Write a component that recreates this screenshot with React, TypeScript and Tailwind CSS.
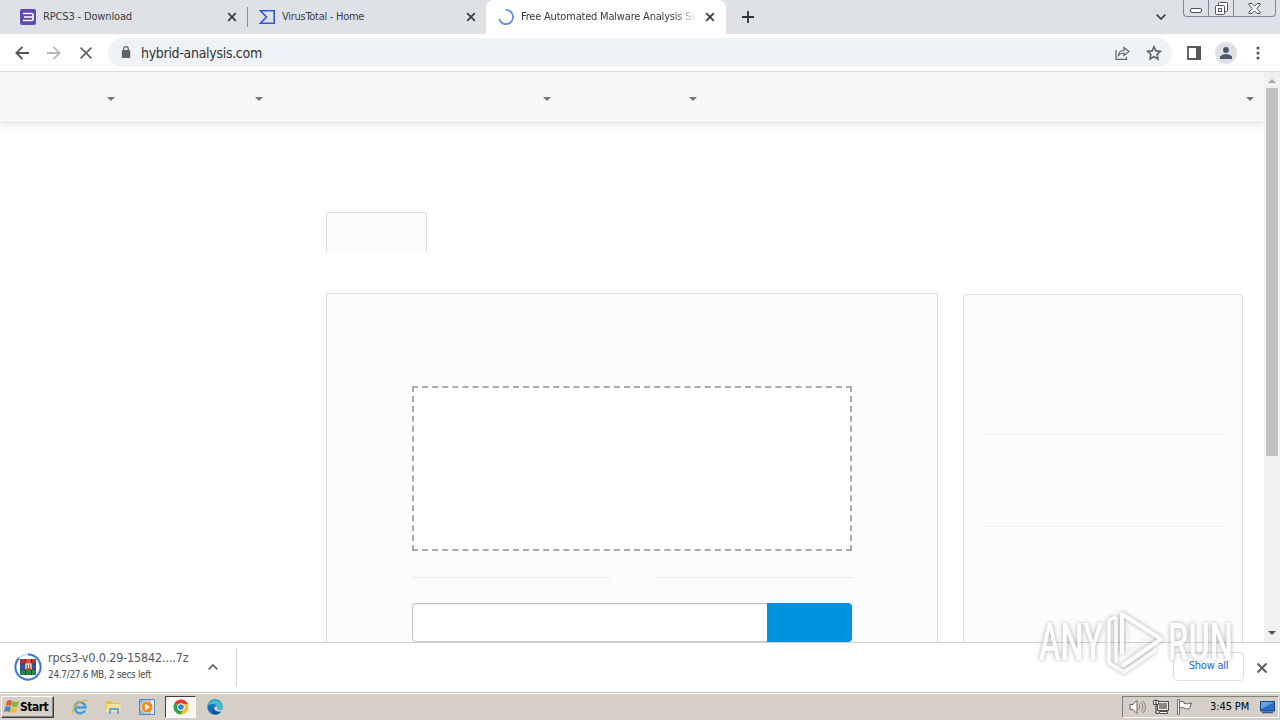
import React from "react";

const CloseIcon: React.FC<{ className?: string }> = ({ className }) => (
  <svg viewBox="0 0 10 10" className={className} fill="none">
    <path d="M1.2 1.2 8.8 8.8M8.8 1.2 1.2 8.8" stroke="currentColor" strokeWidth="1.8" />
  </svg>
);

const TabStrip: React.FC = () => {
  return (
    <div className="flex h-[34px] w-full bg-[#dee1e6] text-[11px] text-[#3c4043]">
      <div className="flex h-full w-[247px] items-center pl-5 pr-[10px]">
        <svg viewBox="0 0 16 16" className="size-4 shrink-0">
          <rect width="16" height="16" rx="2" fill="#6246b5" />
          <path d="M3 4.5h8.5q1.5 0 1.5 1.5v4q0 1.5-1.5 1.5H3M4 8h8" stroke="#fff" strokeWidth="1.7" fill="none" />
        </svg>
        <span className="ml-[7px] w-[178px] whitespace-nowrap tracking-[-0.15px]">RPCS3 - Download</span>
        <CloseIcon className="ml-[6px] size-[10px] shrink-0" />
      </div>
      <div className="flex h-full w-[239px] items-center">
        <div className="h-5 w-px bg-[#8b8e94]" />
        <svg viewBox="0 0 16 14" className="ml-[11px] h-[14px] w-4 shrink-0" fill="none">
          <path d="M1.5.8h13.7v12.4H1.5L7.500 7z" stroke="#3157dc" strokeWidth="1.6" />
        </svg>
        <span className="ml-[7px] w-[178px] whitespace-nowrap tracking-[-0.27px]">VirusTotal - Home</span>
        <CloseIcon className="ml-[6px] size-[10px] shrink-0" />
      </div>
      {/* Active tab */}
      <div className="flex h-full w-[240px] items-center rounded-t-lg bg-white pl-3">
        <svg viewBox="0 0 16 16" className="size-4 shrink-0" fill="none">
          <path d="M8 .9A7.1 7.1 0 1 1 1.2 10.1" stroke="#5d8fd6" strokeWidth="1.8" />
        </svg>
        <span className="ml-[7px] w-[175px] overflow-hidden whitespace-nowrap bg-linear-to-r from-[#303236] from-88% to-transparent bg-clip-text tracking-[-0.2px] text-transparent">
          Free Automated Malware Analysis Se
        </span>
        <CloseIcon className="ml-[9px] size-[10px] shrink-0" />
      </div>
      <svg viewBox="0 0 12 12" className="ml-4 mt-[11px] size-3 shrink-0">
        <path d="M6 0v12M0 6h12" stroke="#303236" strokeWidth="1.8" />
      </svg>
      <svg viewBox="0 0 10 6" className="ml-[402px] mt-[14px] h-[6px] w-[10px] shrink-0" fill="none">
        <path d="M.7.7 5 5 9.3.7" stroke="#3c4043" strokeWidth="1.7" />
      </svg>
      <div className="ml-[17px] flex h-[17px] w-[93px] rounded-b border border-t-0 border-[#85888e] text-[#505359]">
        <div className="flex w-[25px] justify-center border-r border-[#85888e] pt-2">
          <div className="h-[5px] w-3 rounded-[2px] border border-current bg-white" />
        </div>
        <div className="flex w-[25px] justify-center border-r border-[#85888e] pt-[2px]">
          <svg viewBox="0 0 13 13" className="size-[13px]" fill="#fff" stroke="currentColor">
            <rect x="3.5" y=".5" width="9" height="9" rx="1" />
            <rect x=".5" y="3.5" width="9" height="9" rx="1" />
            <rect x="3.5" y="6.5" width="3" height="3" />
          </svg>
        </div>
        <div className="flex flex-1 justify-center pt-[3px]">
          <svg viewBox="0 0 13 11" className="h-[11px] w-[13px]">
            <path d="M1 .5h3l2.500 2.600L9 .5h3V2L8.700 5.500 12 9v1.500H9L6.500 7.900 4 10.500H1V9l3.300-3.500L1 2z" fill="#fff" stroke="currentColor" />
          </svg>
        </div>
      </div>
    </div>
  );
};

const Toolbar: React.FC = () => {
  return (
    <div className="flex h-[38px] items-center border-b border-[#d9dadc] bg-white text-[#5f6368]">
      <svg viewBox="0 0 14 14" className="ml-[15px] size-[14px]" fill="none" stroke="#505357" strokeWidth="1.8">
        <path d="M14 7H1.5M7.5.8 1.3 7l6.2 6.2" />
      </svg>
      <svg viewBox="0 0 14 14" className="ml-[18px] size-[14px]" fill="none" stroke="#b8babd" strokeWidth="1.8">
        <path d="M0 7h12.5M6.5.8 12.7 7l-6.2 6.2" />
      </svg>
      <svg viewBox="0 0 12 12" className="ml-[19px] size-3" fill="none" stroke="#5f6266" strokeWidth="1.7">
        <path d="M.6.6l10.8 10.8M11.4.6.6 11.4" />
      </svg>
      <div className="ml-4 flex h-[29px] w-[1064px] items-center rounded-full bg-[#f0f3f5]">
        <svg viewBox="0 0 10 12" className="-mt-px ml-[13px] h-3 w-[10px]">
          <rect x=".8" y="4" width="8.4" height="8" rx="1" fill="#5f6368" />
          <path d="M2.7 4.500V3a2.300 2.300 0 0 1 4.600 0v1.500" fill="none" stroke="#5f6368" strokeWidth="1.2" />
        </svg>
        <span className="ml-[10px] mt-px w-[960px] whitespace-nowrap text-[14px] tracking-[-0.3px] text-[#303134]">
          hybrid-analysis.com
        </span>
        <svg viewBox="0 0 15 14" className="ml-[14px] h-[14px] w-[15px]" fill="none" stroke="currentColor" strokeWidth="1.2">
          <path d="M1 4v9.300h10.500V11M3.500 9.500q.5-5 5.500-5V1.500l5 4-5 4V7Q5.500 7 3.500 9.500z" />
        </svg>
        <svg viewBox="0 0 16 16" className="ml-4 size-4" fill="none" stroke="currentColor" strokeWidth="1.6">
          <path d="m8 1.800 1.900 4.100 4.500.5-3.300 3.100.9 4.500-4-2.300L4 14l.9-4.500-3.300-3.100 4.500-.5z" />
        </svg>
      </div>
      <svg viewBox="0 0 14 14" className="ml-[15px] size-[14px]">
        <path d="M1 1h12v12H1z" fill="none" stroke="#55585c" strokeWidth="1.8" />
        <path d="M9 0h5v14H9z" fill="#55585c" />
      </svg>
      <div className="ml-[14px] flex size-[22px] items-center justify-center rounded-full bg-[#dde0e5]">
        <svg viewBox="0 0 12 12" className="size-3" fill="#4c5870">
          <circle cx="6" cy="3" r="2.9" />
          <path d="M0 12V9.500Q2 7 6 7t6 2.500V12z" />
        </svg>
      </div>
      <svg viewBox="0 0 4 14" className="ml-[19px] h-[14px] w-1" fill="#505357">
        <circle cx="2" cy="2" r="1.5" />
        <circle cx="2" cy="7" r="1.5" />
        <circle cx="2" cy="12" r="1.5" />
      </svg>
    </div>
  );
};

const Caret: React.FC<{ className: string }> = ({ className }) => (
  <div className={`${className} size-0 border-x-4 border-t-4 border-x-transparent border-t-[#777]`} />
);

const Page: React.FC = () => {
  return (
    <div className="flex h-[570px] w-full overflow-hidden">
      <div className="h-full w-[1264px] overflow-hidden bg-white">
        <div className="flex h-[51px] items-center border-b border-[#e4e4e4] bg-[#f7f7f7] pt-[3px] shadow-[0_2px_8px_rgba(0,0,0,0.09)]">
          <Caret className="ml-[107px]" />
          <Caret className="ml-[140px]" />
          <Caret className="ml-[280px]" />
          <Caret className="ml-[138px]" />
          <Caret className="ml-[549px]" />
        </div>
        <div className="ml-[326px] mt-[89px] h-10 w-[101px] rounded-t-[3px] border border-b-0 border-[#dddde0] bg-[#fcfcfe]" />
        <div className="ml-[326px] mt-[41px] flex">
          <div className="h-[400px] w-[612px] border border-[#dddddf] bg-[#fcfcfe] px-[85px] pt-[92px]">
            <div className="h-[165px] w-[440px] border-2 border-dashed border-[#aaa] bg-white" />
            <div className="mt-[26px] flex w-[441px] justify-between">
              <div className="h-px w-[198px] bg-[#e9e9eb]" />
              <div className="h-px w-[198px] bg-[#e9e9eb]" />
            </div>
            <div className="mt-[25px] flex h-[39px] w-[440px]">
              <div className="w-[355px] rounded-l border border-r-0 border-[#c4c4c4] bg-white shadow-[inset_0_1px_1px_rgba(0,0,0,0.07)]" />
              <div className="w-[85px] rounded-r bg-[#0093dd]" />
            </div>
          </div>
          <div className="ml-[25px] mt-px h-[400px] w-[280px] rounded-t-[3px] border border-[#dddddf] bg-[#fcfcfe] px-5 pt-[139px]">
            <div className="h-px bg-[#ececee]" />
            <div className="mt-[91px] h-px bg-[#ececee]" />
          </div>
        </div>
      </div>
      {/* Scrollbar */}
      <div className="flex h-full w-4 flex-col items-center bg-[#f1f1f1]">
        <div className="mt-[7px] size-0 border-x-4 border-b-4 border-x-transparent border-b-[#a3a3a3]" />
        <div className="mt-[5px] h-[368px] w-3 bg-[#c1c1c1]" />
        <div className="mt-[175px] size-0 border-x-4 border-t-4 border-x-transparent border-t-[#505050]" />
      </div>
    </div>
  );
};

const DownloadBar: React.FC = () => {
  return (
    <div className="flex h-[50px] items-center border-t border-[#d0d1d4] bg-white pb-[2px]">
      <svg viewBox="0 0 28 28" className="ml-[14px] size-7 shrink-0">
        <circle cx="14" cy="14" r="12.6" fill="none" stroke="#c9d8ee" strokeWidth="1.8" />
        <path d="M14 1.400A12.600 12.600 0 1 1 5 5.200" fill="none" stroke="#3b78d8" strokeWidth="2" />
        <path d="M6 6h5v5H6z" fill="#a83a3e" />
        <path d="M11 6h6v5h-6z" fill="#e0513f" />
        <path d="M17 6h5v5h-5z" fill="#a83a3e" />
        <path d="M6 11h16v5H6z" fill="#3752a8" />
        <path d="M6 16h16v6H6z" fill="#28864a" />
        <path d="M11 6h1v16h-1zM17 6h1v16h-1z" fill="#4b2929" />
        <path d="M6 11h16M6 16.500h16" stroke="#3a3434" strokeWidth=".8" />
        <path d="M11 10h7v7h-7z" fill="#b84a35" />
        <path d="M12 16v-5h5v5M14.500 11v4" fill="none" stroke="#f6ead2" strokeWidth="1.2" />
      </svg>
      <div className="ml-[6px] w-[150px] whitespace-nowrap">
        <div className="text-[12.500px] leading-4 tracking-[-0.15px] text-[#55585c]">rpcs3-v0.0.29-15842....7z</div>
        <div className="pt-px text-[10px] leading-4 tracking-[-0.33px] text-[#4a4d51]">24.7/27.6 MB, 2 secs left</div>
      </div>
      <svg viewBox="0 0 10 6" className="ml-[10px] h-[6px] w-[10px]" fill="none">
        <path d="M.7 5.300 5 1l4.300 4.300" stroke="#5f6368" strokeWidth="1.7" />
      </svg>
      <div className="ml-[18px] h-[38px] w-px bg-[#d2d3d6]" />
      <div className="ml-[936px] flex h-[29px] w-[71px] items-center justify-center whitespace-nowrap rounded border border-[#dadce0] text-[11px] tracking-[-0.25px] text-[#1a66cc]">
        Show all
      </div>
      <CloseIcon className="ml-[12px] mt-[2px] size-3 text-[#606367]" />
    </div>
  );
};

const Taskbar: React.FC = () => {
  return (
    <div className="flex h-7 items-center border-t border-[#c5c4c0] bg-[#d5cfc7] pt-px shadow-[inset_0_1px_0_#fff]">
      <div className="ml-px flex h-[22px] w-[53px] items-center border border-b-[#404040] border-l-white border-r-[#404040] border-t-white text-[12px] font-bold tracking-[-0.5px] text-black shadow-[inset_-1px_-1px_0_#808080]">
        <svg viewBox="0 0 16 16" className="ml-[2px] size-4 shrink-0">
          <path d="M3 2q3-2 5 0L7 7Q4 5.500 1.500 7z" fill="#e65a2c" />
          <path d="M8.500 2.300q3 1.400 6.500 0l-1.500 5q-3 1.400-6 0z" fill="#83b646" />
          <path d="M1.300 8Q4 6.500 6.800 8l-1.300 5Q3 11.500 0 13z" fill="#3b86c9" />
          <path d="M7.300 8.200q3 1.400 6 0l-1.500 5q-3 1.500-6 0z" fill="#f5bd2e" />
        </svg>
        <span>Start</span>
      </div>
      {/* Quick launch */}
      <svg viewBox="0 0 18 16" className="ml-[17px] h-4 w-[18px]" fill="none">
        <path d="M14 11.500a5.500 5.500 0 1 1 .7-3H5" stroke="#3aa0dc" strokeWidth="2.4" />
        <path d="M1.500 15Q0 11 6 5.500T17 2" stroke="#e7b83d" strokeWidth="1.3" />
      </svg>
      <svg viewBox="0 0 17 16" className="ml-4 h-4 w-[17px]">
        <path d="M1 2h6l1 2h7v9H1z" fill="#e3bd55" />
        <path d="M2 5h13l1 8H1z" fill="#f7e29a" />
        <path d="M4 15V9h10v6h-2v-4H6v4z" fill="#62abdc" />
      </svg>
      <svg viewBox="0 0 16 16" className="ml-[17px] size-4">
        <path d="M.5.5h15v15H.5z" fill="#8cb9df" stroke="#5c86b3" />
        <path d="M12 1h3v14h-3z" fill="#dbeaf5" />
        <circle cx="8" cy="8" r="6" fill="#f18b1c" stroke="#fff" strokeWidth=".7" />
        <path d="m6 4.500 5 3.500-5 3.500z" fill="#fff" />
      </svg>
      <div className="ml-[10px] flex h-[22px] w-[31px] items-center justify-center border border-b-white border-l-[#404040] border-r-white border-t-[#404040] bg-[#f8f7f5]">
        <svg viewBox="0 0 16 16" className="size-4">
          <circle cx="8" cy="8" r="7.5" fill="#fbc116" />
          <path d="M8 8 1.500 4.300A7.500 7.500 0 0 1 14.500 4.300L14.800 5H8z" fill="#e33b2e" />
          <path d="M8 8 1.500 4.300A7.500 7.500 0 0 0 7.500 15.500L11 9.500z" fill="#31a350" />
          <circle cx="8" cy="8" r="3.7" fill="#fff" />
          <circle cx="8" cy="8" r="2.8" fill="#3b7de0" />
        </svg>
      </div>
      <svg viewBox="0 0 16 16" className="ml-[11px] size-4">
        <circle cx="8" cy="8" r="7.7" fill="#1374c4" />
        <path d="M.5 7A7.700 7.700 0 0 1 15.700 8q0 3-3.700 3-3 0-2-2.500Q10 5 6.500 5 2 5 .5 7z" fill="#40bfc4" />
        <path d="M6 8.500q-.5 5 6.500 4.500l2-.5Q12 15.500 8 15.300 3 14 6 8.500z" fill="#174d94" />
        <path d="M9.500 7q1.500 1.500.5 3 1.500 1.500 5.500.3l-.8 1.900Q8 13.500 7 9q.5-1.500 2.500-2z" fill="#d5cfc7" />
      </svg>
      {/* Notification area */}
      <div className="ml-auto mr-[1px] flex h-[22px] w-[157px] items-center border border-b-white border-l-[#808080] border-r-white border-t-[#808080]">
        <svg viewBox="0 0 17 16" className="ml-[6px] h-4 w-[17px] shrink-0" fill="none">
          <path d="M1 5.500h3l4-4v13l-4-4H1z" fill="#fff" stroke="#66635e" />
          <path d="M10 5.500q2 2.500 0 5M12 3.500q4 4.500 0 9M14 2q5 6 0 12" stroke="#88857f" />
        </svg>
        <svg viewBox="0 0 16 16" className="ml-[7px] size-4 shrink-0" fill="none">
          <path d="M4.500 2.500h11v9h-11z" fill="#8b8883" stroke="#504e49" />
          <path d="M5.500 3.500h9v7h-9z" stroke="#eee" />
          <path d="M6.500 12.500h8v2h-8z" fill="#fff" stroke="#504e49" />
          <path d="M.5 1.500h5v4h-5z" fill="#fff" stroke="#504e49" />
          <path d="M3 .5V5M3 6v8.500h3" stroke="#504e49" strokeWidth="1.2" />
        </svg>
        <svg viewBox="0 0 16 16" className="ml-[7px] size-4 shrink-0">
          <path d="M3.500 2.500q2.500-.5 4.500.5v1.500q3 1 7.500-.5l-2 5.500q-3 1.500-5.500-.5-2-1-4.500 0z" fill="#fff" stroke="#66635e" />
          <path d="M1.500.5h2v15h-2z" fill="#fff" stroke="#66635e" strokeWidth=".9" />
        </svg>
        <span className="ml-[18px] w-[45px] whitespace-nowrap text-[11px] tracking-[-0.1px] text-black">3:45 PM</span>
        <svg viewBox="0 0 15 13" className="ml-[5px] h-[13px] w-[15px] shrink-0">
          <path d="M.5.500h14v9.500H.5z" fill="#2b6fc4" stroke="#163f7f" />
          <path d="M1 1h13L1 8z" fill="#63a3e6" />
          <path d="M2 11.500h11" stroke="#315b91" strokeWidth="1.5" />
        </svg>
      </div>
    </div>
  );
};

const Watermark: React.FC = () => {
  return (
    <svg
      viewBox="0 0 210 80"
      className="pointer-events-none absolute left-[1030px] top-[600px] h-20 w-[210px] opacity-75 drop-shadow-[0_0_2px_rgba(0,0,0,0.45)]"
      fontFamily="Roboto, 'Liberation Sans', sans-serif"
      fontSize="51"
      fontWeight="500"
      fill="#fff"
    >
      <text x="9" y="60" textLength="64" lengthAdjust="spacingAndGlyphs">ANY</text>
      <text x="138" y="60" textLength="65" lengthAdjust="spacingAndGlyphs">RUN</text>
      {/* Play mark: front triangle with two offset edges behind it */}
      <g fill="none" stroke="#fff" strokeLinejoin="round">
        <path d="M92 54V14l39 25-39 27" strokeWidth="4" />
        <path d="M97 25v28l23-14" strokeWidth="1.5" opacity=".55" />
        <path d="M86 17l-7 3v43l7 4" strokeWidth="3.5" />
        <path d="M86 17v46M85 67l9 5 32-22" strokeWidth="3.5" opacity=".85" />
      </g>
    </svg>
  );
};

const App: React.FC = () => {
  return (
    <div className="relative h-[720px] w-[1280px] overflow-hidden bg-white font-['DejaVu_Sans_Condensed','DejaVu_Sans',sans-serif]">
      <TabStrip />
      <Toolbar />
      <Page />
      <DownloadBar />
      <Taskbar />
      <Watermark />
    </div>
  );
};

export default App;
